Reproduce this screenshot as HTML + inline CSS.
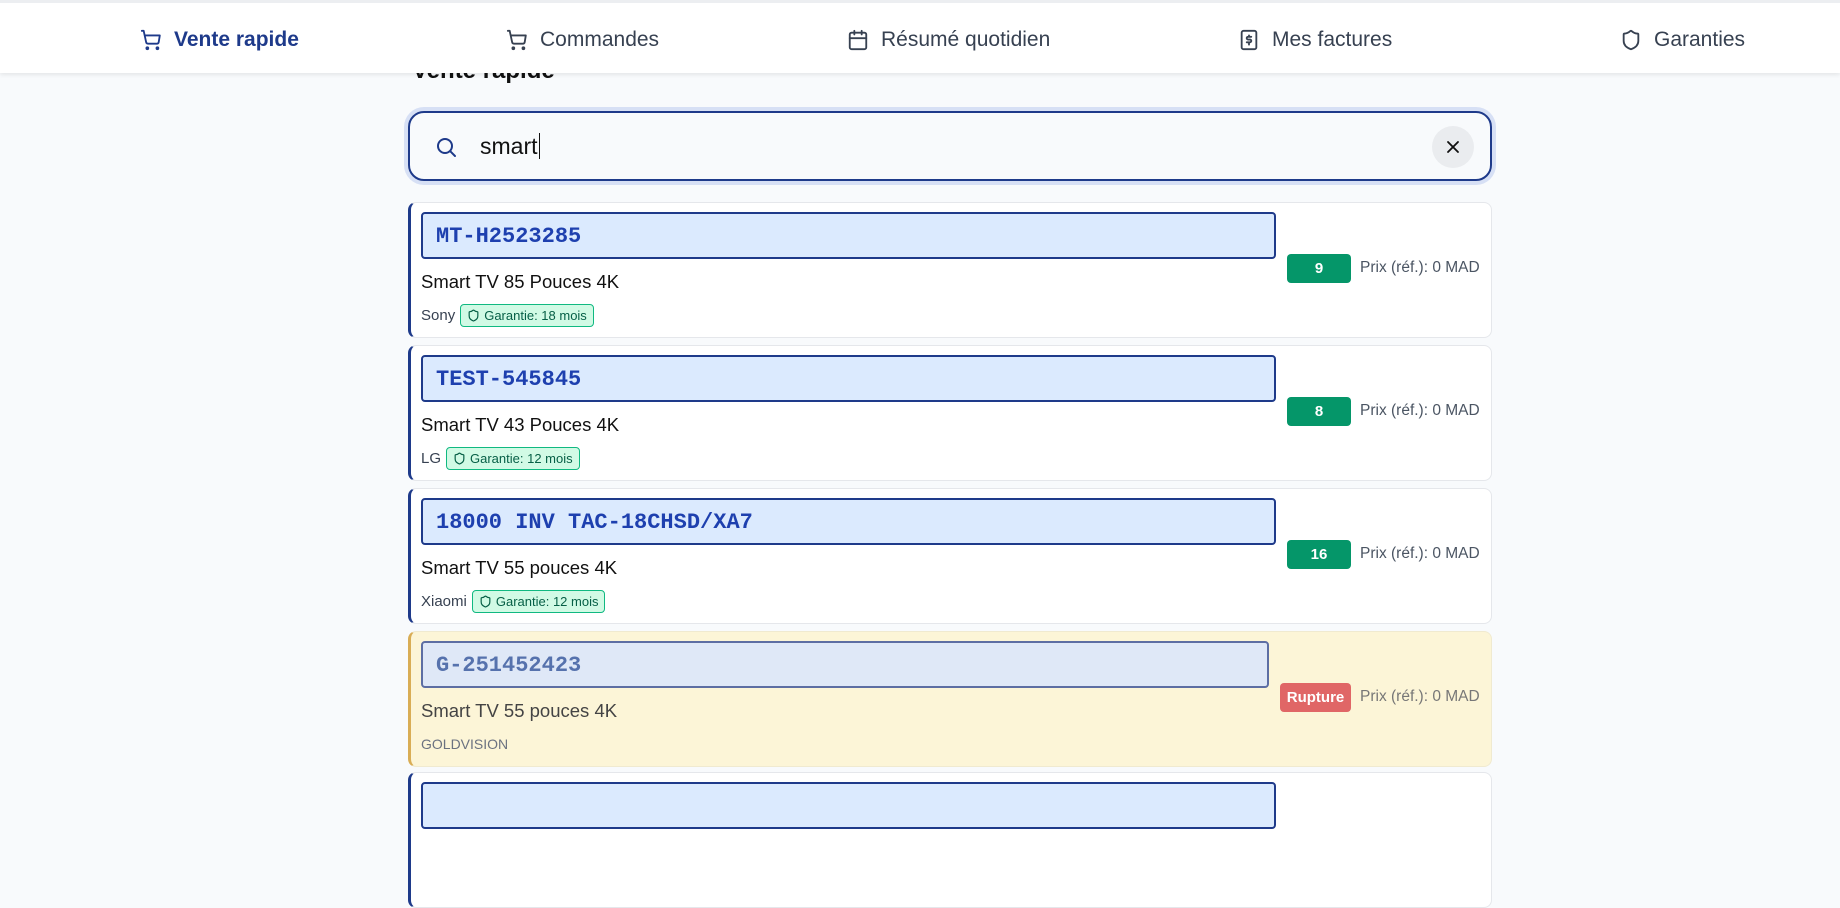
<!DOCTYPE html>
<html><head><meta charset="utf-8"><style>
*{box-sizing:border-box;margin:0;padding:0}
body{width:1840px;height:787px;overflow:hidden;background:#f8fafc;font-family:"Liberation Sans",sans-serif;position:relative}
.nav{position:absolute;left:0;top:0;width:1840px;height:73px;background:#fff;border-top:3px solid #eceef1;box-shadow:0 2px 4px rgba(0,0,0,.08);z-index:5}
.ni{position:absolute;top:25px;font-size:21px;color:#374151;display:flex;align-items:center;gap:12px;white-space:nowrap}
.ni svg{width:22px;height:22px}
.ni.act{color:#1e3a8a;font-weight:bold}
h1{position:absolute;left:412px;top:57px;font-size:24px;font-weight:bold;color:#111;z-index:1}
.search{position:absolute;left:408px;top:111px;width:1084px;height:70px;border:2px solid #1e3a8a;border-radius:16px;box-shadow:0 0 0 4px #d7e0f5;background:#f8fafc}
.search .txt{position:absolute;left:70px;top:20px;font-size:23px;color:#111}
.clr{position:absolute;right:16px;top:13px;width:42px;height:42px;border-radius:50%;background:#eaecef}
.card{position:absolute;left:408px;width:1084px;height:136px;background:#fff;border:1px solid #e5e7eb;border-left:3px solid #1e3a8a;border-radius:8px}
.sku{position:absolute;left:10px;top:9px;width:855px;height:47px;background:#dbeafe;border:2px solid #1e3a8a;border-radius:4px;font-family:"Liberation Mono",monospace;font-weight:bold;font-size:22px;color:#1e40af;padding:10px 0 0 13px}
.name{position:absolute;left:10px;top:68px;font-size:18.5px;color:#111}
.brand{position:absolute;left:10px;top:101px;font-size:15px;color:#374151;display:flex;align-items:center;gap:5px}
.gar{display:inline-flex;align-items:center;gap:4px;height:23px;border:1px solid #10b981;background:#d1fae5;color:#065f46;border-radius:4px;font-size:13px;padding:0 6px}
.st{position:absolute;left:876px;top:51px;width:64px;height:29px;background:#059669;color:#fff;font-weight:bold;font-size:15px;border-radius:4px;text-align:center;line-height:29px}
.px{position:absolute;left:949px;top:56px;font-size:15.5px;color:#4b5563}
</style></head><body>
<div class="nav">
 <div class="ni act" style="left:140px"><svg viewBox="0 0 24 24" fill="none" stroke="currentColor" stroke-width="2" stroke-linecap="round" stroke-linejoin="round"><circle cx="8" cy="21" r="1"/><circle cx="19" cy="21" r="1"/><path d="M2 2h2l2.7 12.4a2 2 0 0 0 2 1.6h9.7a2 2 0 0 0 2-1.6L21.6 7H5.1"/></svg>Vente rapide</div>
 <div class="ni" style="left:506px"><svg viewBox="0 0 24 24" fill="none" stroke="currentColor" stroke-width="2" stroke-linecap="round" stroke-linejoin="round"><circle cx="8" cy="21" r="1"/><circle cx="19" cy="21" r="1"/><path d="M2 2h2l2.7 12.4a2 2 0 0 0 2 1.6h9.7a2 2 0 0 0 2-1.6L21.6 7H5.1"/></svg>Commandes</div>
 <div class="ni" style="left:847px"><svg viewBox="0 0 24 24" fill="none" stroke="currentColor" stroke-width="2" stroke-linecap="round" stroke-linejoin="round"><rect x="3" y="4" width="18" height="18" rx="2"/><path d="M16 2v4M8 2v4M3 10h18"/></svg>Résumé quotidien</div>
 <div class="ni" style="left:1238px"><svg viewBox="0 0 24 24" fill="none" stroke="currentColor" stroke-width="2" stroke-linecap="round" stroke-linejoin="round"><rect x="4" y="2" width="16" height="20" rx="2"/><path d="M14.5 8.5h-3.5a1.5 1.5 0 0 0 0 3h2a1.5 1.5 0 0 1 0 3H9.5M12 7v1.5M12 14.5V17"/></svg>Mes factures</div>
 <div class="ni" style="left:1620px"><svg viewBox="0 0 24 24" fill="none" stroke="currentColor" stroke-width="2" stroke-linecap="round" stroke-linejoin="round"><path d="M20 13c0 5-3.5 7.5-7.7 9a1 1 0 0 1-.7 0C7.5 20.5 4 18 4 13V6a1 1 0 0 1 1-1c2 0 4.5-1.2 6.2-2.7a1.2 1.2 0 0 1 1.5 0C14.5 3.8 17 5 19 5a1 1 0 0 1 1 1z"/></svg>Garanties</div>
</div>
<h1>Vente rapide</h1>
<div class="search">
 <svg style="position:absolute;left:24px;top:22px" width="24" height="24" viewBox="0 0 24 24" fill="none" stroke="#1e3a8a" stroke-width="2" stroke-linecap="round"><circle cx="11" cy="11" r="7"/><path d="M21 21l-4.3-4.3"/></svg>
 <div class="txt">smart<span style="border-left:1.5px solid #111;margin-left:1px"></span></div>
 <div class="clr"><svg style="position:absolute;left:11px;top:11px" width="20" height="20" viewBox="0 0 24 24" fill="none" stroke="#111" stroke-width="2.2" stroke-linecap="round"><path d="M6 6l12 12M18 6L6 18"/></svg></div>
</div>

<div class="card" style="top:202px"><div class="sku">MT-H2523285</div><div class="name">Smart TV 85 Pouces 4K</div>
<div class="brand">Sony <span class="gar"><svg width="13" height="13" viewBox="0 0 24 24" fill="none" stroke="currentColor" stroke-width="2.2"><path d="M20 13c0 5-3.5 7.5-7.7 9a1 1 0 0 1-.7 0C7.5 20.5 4 18 4 13V6a1 1 0 0 1 1-1c2 0 4.5-1.2 6.2-2.7a1.2 1.2 0 0 1 1.5 0C14.5 3.8 17 5 19 5a1 1 0 0 1 1 1z"/></svg>Garantie: 18 mois</span></div>
<div class="st">9</div><div class="px">Prix (réf.): 0 MAD</div></div>

<div class="card" style="top:345px"><div class="sku">TEST-545845</div><div class="name">Smart TV 43 Pouces 4K</div>
<div class="brand">LG <span class="gar"><svg width="13" height="13" viewBox="0 0 24 24" fill="none" stroke="currentColor" stroke-width="2.2"><path d="M20 13c0 5-3.5 7.5-7.7 9a1 1 0 0 1-.7 0C7.5 20.5 4 18 4 13V6a1 1 0 0 1 1-1c2 0 4.5-1.2 6.2-2.7a1.2 1.2 0 0 1 1.5 0C14.5 3.8 17 5 19 5a1 1 0 0 1 1 1z"/></svg>Garantie: 12 mois</span></div>
<div class="st">8</div><div class="px">Prix (réf.): 0 MAD</div></div>

<div class="card" style="top:488px"><div class="sku">18000 INV TAC-18CHSD/XA7</div><div class="name">Smart TV 55 pouces 4K</div>
<div class="brand">Xiaomi <span class="gar"><svg width="13" height="13" viewBox="0 0 24 24" fill="none" stroke="currentColor" stroke-width="2.2"><path d="M20 13c0 5-3.5 7.5-7.7 9a1 1 0 0 1-.7 0C7.5 20.5 4 18 4 13V6a1 1 0 0 1 1-1c2 0 4.5-1.2 6.2-2.7a1.2 1.2 0 0 1 1.5 0C14.5 3.8 17 5 19 5a1 1 0 0 1 1 1z"/></svg>Garantie: 12 mois</span></div>
<div class="st">16</div><div class="px">Prix (réf.): 0 MAD</div></div>

<div class="card" style="top:631px;background:#fcf5d7;border-left-color:#d9ad55;border-color:#f0ead0 #f0ead0 #f0ead0 #d9ad55"><div class="sku" style="width:848px;background:#dfe8f7;border-color:#5d6ea3;color:#5672ad">G-251452423</div><div class="name" style="color:#444">Smart TV 55 pouces 4K</div>
<div class="brand" style="color:#6b7280;font-size:14px;top:104px">GOLDVISION</div>
<div class="st" style="left:869px;width:71px;background:#e06666;font-size:15px">Rupture</div><div class="px" style="color:#777">Prix (réf.): 0 MAD</div></div>

<div class="card" style="top:772px"><div class="sku"></div></div>
</body></html>
